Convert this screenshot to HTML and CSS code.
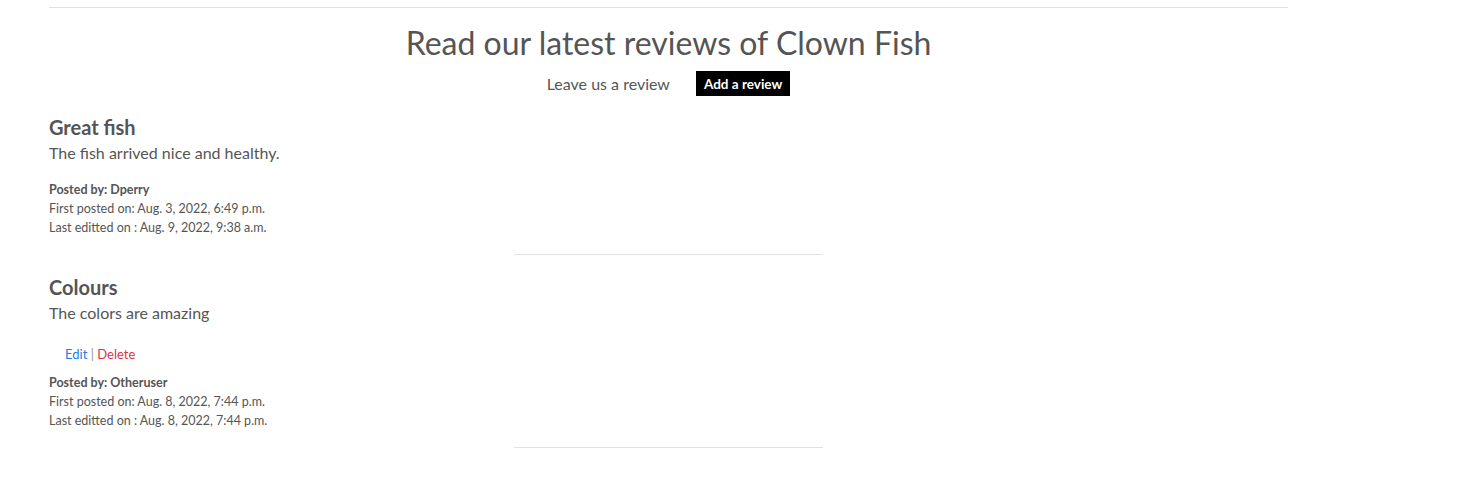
FILE: index.html
```html
<!DOCTYPE html>
<html lang="en">
<head>
<meta charset="utf-8">
<title>Reviews - Clown Fish</title>
<link rel="stylesheet" href="styles.css">
</head>
<body>
<div class="container">
  <hr class="top-rule">
  <h2 class="page-title">Read our latest reviews of Clown Fish</h2>
  <div class="cta-row">
    <span class="cta-text">Leave us a review</span>
    <a class="btn-add" href="#">Add a review</a>
  </div>

  <div class="review">
    <h3 class="review-title">Great fish</h3>
    <p class="review-body">The fish arrived nice and healthy.</p>
    <div class="meta">
      <div class="meta-author">Posted by: Dperry</div>
      <div>First posted on: Aug. 3, 2022, 6:49 p.m.</div>
      <div>Last editted on : Aug. 9, 2022, 9:38 a.m.</div>
    </div>
    <hr class="review-rule">
  </div>

  <div class="review">
    <h3 class="review-title">Colours</h3>
    <p class="review-body">The colors are amazing</p>
    <div class="actions"><a class="edit" href="#">Edit</a> <span class="sep">|</span> <a class="delete" href="#">Delete</a></div>
    <div class="meta">
      <div class="meta-author">Posted by: Otheruser</div>
      <div>First posted on: Aug. 8, 2022, 7:44 p.m.</div>
      <div>Last editted on : Aug. 8, 2022, 7:44 p.m.</div>
    </div>
    <hr class="review-rule">
  </div>
</div>
</body>
</html>
```
FILE: styles.css
```css
* { box-sizing: border-box; }
html, body { margin: 0; padding: 0; background: #fff; }
body {
  font-family: Lato, "Open Sans", "Liberation Sans", sans-serif;
  color: #555;
}
.container {
  width: 1239px;
  margin-left: 49px;
}
.top-rule {
  border: 0;
  height: 1px;
  background: #e2e2e2;
  margin: 7px 0 0 0;
}
.page-title {
  text-align: center;
  font-weight: 400;
  font-size: 32px;
  line-height: 40px;
  margin: 15px 0 0 0;
  color: #555;
}
.cta-row {
  display: flex;
  justify-content: center;
  align-items: center;
  gap: 26px;
  margin-top: 8px;
}
.cta-text {
  font-size: 16px;
  color: #555;
}
.btn-add {
  background: #000;
  color: #fff;
  font-weight: 700;
  font-size: 13.5px;
  text-decoration: none;
  height: 25px;
  display: flex;
  align-items: center;
  padding: 0 8px;
}
.review { margin-top: 19px; }
.review + .review { margin-top: 20px; }
.review-title {
  font-size: 20px;
  font-weight: 700;
  line-height: 24px;
  margin: 0;
  color: #555;
}
.review-body {
  font-size: 16px;
  line-height: 20px;
  margin: 4px 0 0 0;
  color: #555;
}
.actions {
  font-size: 13px;
  line-height: 19px;
  margin: 22px 0 0 16px;
}
.edit { color: #1a7ee8; text-decoration: none; }
.delete { color: #dc3545; text-decoration: none; }
.sep { color: #999; }
.meta {
  font-size: 12.5px;
  line-height: 19px;
  margin-top: 17px;
  color: #555;
}
.actions + .meta { margin-top: 9px; }
.meta-author { font-weight: 700; }
.review-rule {
  border: 0;
  height: 1px;
  background: #e2e2e2;
  width: 25%;
  margin: 17px auto 0 auto;
}
```
